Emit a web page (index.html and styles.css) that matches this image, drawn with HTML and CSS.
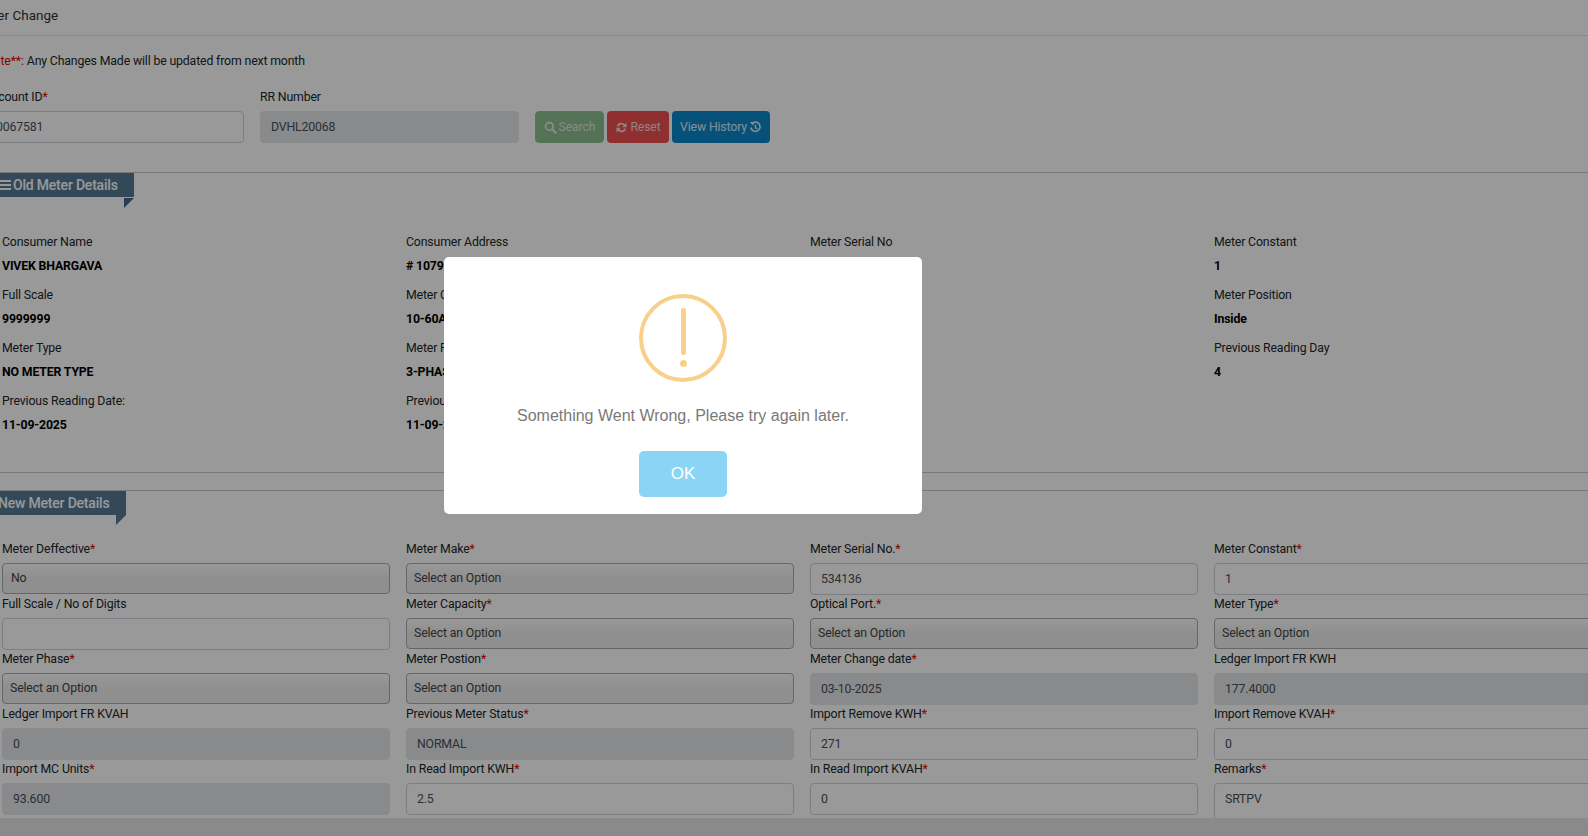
FILE: index.html
```html
<!DOCTYPE html>
<html lang="en">
<head>
<meta charset="utf-8">
<title>Meter Change</title>
<link rel="stylesheet" href="styles.css">
</head>
<body>
<div class="app">
  <main class="page">
    <div class="scroller">
      <div class="page-title">Meter Change</div>
      <p class="note"><span class="red">Note**:</span> Any Changes Made will be updated from next month</p>
      <div class="search-row">
        <div class="search-field">
          <label class="label">Account ID<span class="red">*</span></label>
          <div class="input">0067581</div>
        </div>
        <div class="search-field">
          <label class="label">RR Number</label>
          <div class="input disabled">DVHL20068</div>
        </div>
        <div class="actions">
          <button class="btn green">
            <svg class="ico" viewBox="0 0 14 14"><circle cx="5.8" cy="5.8" r="4.1" fill="none" stroke="currentColor" stroke-width="2"/><path d="M8.800 8.800l3.800 3.800" stroke="currentColor" stroke-width="2.400" stroke-linecap="round"/></svg>Search</button>
          <button class="btn red-btn">
            <svg class="ico" viewBox="0 0 14 14"><path d="M2 6a5 5 0 0 1 8.600-2.600L12.400 2v4.600H7.800l1.600-1.700A3.200 3.200 0 0 0 3.900 6zM12 8a5 5 0 0 1-8.600 2.600L1.600 12V7.400h4.600l-1.600 1.700A3.200 3.200 0 0 0 10.100 8z" fill="currentColor"/></svg>Reset</button>
          <button class="btn blue">View History
            <svg class="ico" viewBox="0 0 14 14"><path d="M2.900 3.300A5 5 0 1 1 2 7" fill="none" stroke="currentColor" stroke-width="1.800"/><path d="M1 1.200h3.800V5z" fill="currentColor"/><path d="M7 4v3.400l2 1" fill="none" stroke="currentColor" stroke-width="1.500"/></svg></button>
        </div>
      </div>
      <hr class="rule first">
      <div class="ribbon old"><span class="bars"><i></i><i></i><i></i></span>Old Meter Details</div>
      <section class="details">
        <div class="item"><span>Consumer Name</span><b>VIVEK BHARGAVA</b></div>
        <div class="item"><span>Consumer Address</span><b># 1079</b></div>
        <div class="item"><span>Meter Serial No</span><b>534136</b></div>
        <div class="item"><span>Meter Constant</span><b>1</b></div>
        <div class="item"><span>Full Scale</span><b>9999999</b></div>
        <div class="item"><span>Meter Capacity</span><b>10-60A</b></div>
        <div class="item"><span>Optical Port</span><b>No</b></div>
        <div class="item"><span>Meter Position</span><b>Inside</b></div>
        <div class="item"><span>Meter Type</span><b>NO METER TYPE</b></div>
        <div class="item"><span>Meter Phase</span><b>3-PHASE</b></div>
        <div class="item"><span>Meter Make</span><b>L&amp;T</b></div>
        <div class="item"><span>Previous Reading Day</span><b>4</b></div>
        <div class="item"><span>Previous Reading Date:</span><b>11-09-2025</b></div>
        <div class="item"><span>Previous Date</span><b>11-09-2025</b></div>
      </section>
      <hr class="rule second">
      <hr class="rule third">
      <div class="ribbon new">New Meter Details</div>
      <section class="form">
        <div class="field"><label class="label">Meter Deffective<span class="red">*</span></label><div class="select no">No</div></div>
        <div class="field"><label class="label">Meter Make<span class="red">*</span></label><div class="select">Select an Option</div></div>
        <div class="field"><label class="label">Meter Serial No.<span class="red">*</span></label><div class="input">534136</div></div>
        <div class="field"><label class="label">Meter Constant<span class="red">*</span></label><div class="input">1</div></div>

        <div class="field"><label class="label">Full Scale / No of Digits</label><div class="input"></div></div>
        <div class="field"><label class="label">Meter Capacity<span class="red">*</span></label><div class="select">Select an Option</div></div>
        <div class="field"><label class="label">Optical Port.<span class="red">*</span></label><div class="select">Select an Option</div></div>
        <div class="field"><label class="label">Meter Type<span class="red">*</span></label><div class="select">Select an Option</div></div>

        <div class="field"><label class="label">Meter Phase<span class="red">*</span></label><div class="select">Select an Option</div></div>
        <div class="field"><label class="label">Meter Postion<span class="red">*</span></label><div class="select">Select an Option</div></div>
        <div class="field"><label class="label">Meter Change date<span class="red">*</span></label><div class="input disabled">03-10-2025</div></div>
        <div class="field"><label class="label">Ledger Import FR KWH</label><div class="input disabled">177.4000</div></div>

        <div class="field"><label class="label">Ledger Import FR KVAH</label><div class="input disabled">0</div></div>
        <div class="field"><label class="label">Previous Meter Status<span class="red">*</span></label><div class="input disabled">NORMAL</div></div>
        <div class="field"><label class="label">Import Remove KWH<span class="red">*</span></label><div class="input">271</div></div>
        <div class="field"><label class="label">Import Remove KVAH<span class="red">*</span></label><div class="input">0</div></div>

        <div class="field"><label class="label">Import MC Units<span class="red">*</span></label><div class="input disabled">93.600</div></div>
        <div class="field"><label class="label">In Read Import KWH<span class="red">*</span></label><div class="input">2.5</div></div>
        <div class="field"><label class="label">In Read Import KVAH<span class="red">*</span></label><div class="input">0</div></div>
        <div class="field"><label class="label">Remarks<span class="red">*</span></label><div class="input tall">SRTPV</div></div>
      </section>
    </div>
  </main>
  <footer class="footer"></footer>
</div>

<div class="overlay">
  <div class="modal">
    <div class="warn"><span class="warn-line"></span><span class="warn-dot"></span></div>
    <p class="modal-text">Something Went Wrong, Please try again later.</p>
    <button class="ok">OK</button>
  </div>
</div>
</body>
</html>
```
FILE: styles.css
```css
* { box-sizing: border-box; }
html, body { margin: 0; height: 100%; overflow: hidden; background: #fff; }
body { font-family: Roboto, "Open Sans", sans-serif; font-size: 12.3px; letter-spacing: -.15px; color: #212529; }
.app { height: 836px; display: flex; flex-direction: column; }
.page { flex: 1; overflow: hidden; min-height: 0; }
.scroller { width: 1640px; margin-left: -14px; }
.page-title { height: 36px; border-bottom: 1px solid #dee2e6; line-height: 30px; font-size: 13.5px; letter-spacing: 0; color: #333; text-indent: -12px; }
.note { margin: 0 0 0 -1px; height: 51px; line-height: 50px; }
.red { color: #e00000; }
.search-row { display: flex; gap: 16px; height: 85px; align-items: flex-start; margin-left: -1px; }
.search-field { width: 259px; display: flex; flex-direction: column; }
.search-row .label { margin-bottom: 4px; text-indent: -1px; }
.search-field + .search-field .label { text-indent: 0; }
.label { display: block; line-height: 20px; }
.actions { display: flex; gap: 3px; margin-top: 24px; }
.input { height: 32px; border: 1px solid #ced4da; border-radius: 4px; padding: 0 10px; line-height: 30px; color: #495057; background: #fff; }
.input.disabled { background: #e4e6ea; border-color: #e4e6ea; }
.btn { height: 32px; border: 1px solid transparent; border-radius: 4px; padding: 0 6px; font: inherit; letter-spacing: inherit; display: flex; align-items: center; justify-content: center; gap: 2px; white-space: nowrap; }
.btn.green { width: 69px; background: #8cc08f; border-color: #8ec792; color: #dfe9e0; }
.btn.red-btn { width: 62px; background: #ee4f4f; color: #f4dcdc; }
.btn.blue { width: 98px; background: #0a88cc; color: #e0ecf4; }
.ico { width: 13px; height: 13px; flex: none; }
.rule { margin: 0; border: 0; border-top: 1px solid #c8c8c8; }
.ribbon { position: relative; background: #557b96; color: #fff; height: 24px; font-size: 14px; font-weight: 500; letter-spacing: -.2px; display: flex; align-items: center; gap: 2px; }
.ribbon::after { content: ""; position: absolute; right: 0; border-style: solid; }
.ribbon.old { width: 148px; padding-left: 14px; }
.ribbon.old::after { top: 25px; border-width: 10px 10px 0 0; border-color: #47688a transparent transparent transparent; }
.ribbon.new { width: 140px; padding-left: 12px; }
.ribbon.new::after { top: 24px; border-width: 10px 10px 0 0; border-color: #557b96 transparent transparent transparent; }
.bars { display: flex; flex-direction: column; gap: 2px; width: 11px; }
.bars i { display: block; height: 2px; background: #fff; }
.details { display: grid; grid-template-columns: repeat(4, 388px); grid-auto-rows: 53px; align-content: start; column-gap: 16px; padding: 35px 0 0 16px; height: 275px; }
.item { display: flex; flex-direction: column; }
.item span { line-height: 20px; }
.item b { line-height: 20px; margin-top: 4px; font-weight: 700; color: #000; }
.rule.third { margin-top: 17px; }
.form { display: grid; grid-template-columns: repeat(4, 388px); grid-auto-rows: 55px; column-gap: 16px; padding: 24px 0 0 16px; }
.field .label { height: 20px; margin-bottom: 4px; }
.field .input { height: 32px; line-height: 30px; }
.field .input.tall { height: 60px; }
.select { height: 31px; line-height: 28px; border: 1px solid #aaa; border-radius: 4px; padding: 0 7px; color: #444; background: linear-gradient(to top, #eee 50%, #fff 100%); }
.select.no { padding-left: 8px; }
.footer { height: 18px; flex: none; background: #e6e6e6; }
.overlay { position: fixed; inset: 0; background: rgba(0, 0, 0, .4); }
.modal { position: absolute; left: 444px; top: 257px; width: 478px; height: 257px; background: #fff; border-radius: 5px; display: flex; flex-direction: column; align-items: center; padding-top: 37px; font-family: "Liberation Sans", Arial, sans-serif; letter-spacing: 0; }
.warn { width: 88px; height: 88px; border: 4px solid #f9d08a; border-radius: 50%; flex: none; display: flex; flex-direction: column; align-items: center; }
.warn-line { width: 5px; height: 47px; margin-top: 10px; background: #f9d08a; border-radius: 2px; }
.warn-dot { width: 7px; height: 7px; margin-top: 5px; background: #f9d08a; border-radius: 50%; }
.modal-text { margin: 23px 0 0; font-size: 16px; line-height: 22px; color: #797979; }
.ok { margin-top: 24px; width: 88px; height: 46px; border: 0; border-radius: 5px; background: #8cd4f5; color: #fff; font: 17px "Liberation Sans", Arial, sans-serif; }
```
